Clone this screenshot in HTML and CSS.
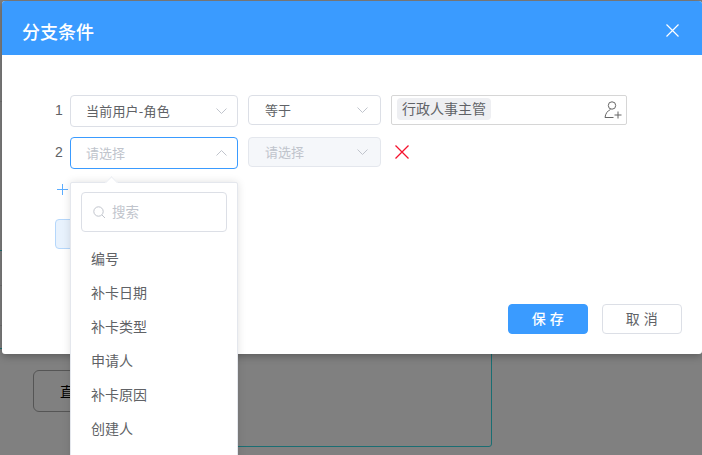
FILE: index.html
```html
<!DOCTYPE html>
<html lang="zh">
<head>
<meta charset="utf-8">
<title>分支条件</title>
<link rel="stylesheet" href="styles.css">
</head>
<body>
<div class="backdrop">
  <div class="bg-node">直</div>
  <div class="bg-frame"></div>
  <i class="tick tick-a"></i>
  <i class="tick tick-b"></i>
  <i class="tick tick-c"></i>
  <i class="tick tick-d"></i>
  <i class="tick tick-e"></i>
</div>
<section class="dialog">
  <header class="head">
    <h1 class="title">分支条件</h1>
    <svg class="close" viewBox="0 0 13 13"><path d="M.5.5l12 12M12.500.5l-12 12"/></svg>
  </header>
  <div class="body">
    <div class="row row-first">
      <span class="num">1</span>
      <div class="sel sel-field"><span class="val">当前用户-角色</span><svg class="chev" viewBox="0 0 11 6"><path d="M.5.500l5 5 5-5"/></svg></div>
      <div class="sel sel-op"><span class="txt">等于</span><svg class="chev" viewBox="0 0 11 6"><path d="M.5.500l5 5 5-5"/></svg></div>
      <div class="people">
        <span class="tag">行政人事主管</span>
        <svg class="user" viewBox="0 0 18 18"><circle cx="8" cy="4.500" r="3.700"/><path d="M6.500 8.500C3.500 9.800 1.500 12.500 1 16.500H9.500M10.500 14h7M14 10.500v7"/></svg>
      </div>
    </div>
    <div class="row row-second">
      <span class="num">2</span>
      <div class="sel sel-field focus"><span class="ph">请选择</span><svg class="chev" viewBox="0 0 11 6"><path d="M.5 5.500l5-5 5 5"/></svg></div>
      <div class="sel sel-op off"><span class="ph">请选择</span><svg class="chev" viewBox="0 0 11 6"><path d="M.5.500l5 5 5-5"/></svg></div>
      <svg class="del" viewBox="0 0 14 14"><path d="M.5.500l13 13M13.500.5l-13 13"/></svg>
    </div>
    <svg class="plus" viewBox="0 0 11 11"><path d="M5.500 0v11M0 5.500h11"/></svg>
    <div class="ghost"></div>
    <div class="foot">
      <button class="btn primary">保 存</button>
      <button class="btn">取 消</button>
    </div>
  </div>
</section>
<div class="drop">
  <div class="search">
    <svg class="mag" viewBox="0 0 13 13"><circle cx="5.500" cy="5.500" r="4.700"/><path d="M9 9l3 3"/></svg>
    <span class="search-text">搜索</span>
  </div>
  <ul class="opts">
    <li>编号</li>
    <li>补卡日期</li>
    <li>补卡类型</li>
    <li>申请人</li>
    <li>补卡原因</li>
    <li>创建人</li>
  </ul>
</div>
</body>
</html>
```
FILE: styles.css
```css
* { box-sizing: border-box; margin: 0; padding: 0; }
html, body { height: 100%; overflow: hidden; }
body {
  position: relative;
  background: #808080;
  font-family: "Noto Sans CJK SC", "Liberation Sans", sans-serif;
  color: #606266;
}
.backdrop { position: absolute; inset: 0; }
.bg-node {
  position: absolute; left: 33px; top: 370px; width: 100px; height: 42px;
  border: 1px solid #555; border-radius: 6px;
  color: #000; font-size: 14px; line-height: 40px; padding-left: 26px;
}
.bg-frame {
  position: absolute; left: 100px; top: 300px; width: 392px; height: 147px;
  border: 1px solid #1a6e73; border-radius: 3px;
}
.tick { position: absolute; left: 0; width: 2px; height: 1px; background: #737373; }
.tick-a { top: 101px; }
.tick-b { top: 250px; background: #1f7075; }
.tick-c { top: 285px; }
.tick-d { top: 325px; }
.tick-e { top: 348px; background: #1f7075; }
.dialog {
  position: absolute; left: 2px; top: 1px; width: 700px; height: 353px;
  background: #fff; border-radius: 3px; overflow: hidden;
  box-shadow: 0 2px 8px rgba(0,0,0,.3);
}
.head {
  height: 54px; background: #3a9bff; color: #fff;
  display: flex; align-items: center; justify-content: space-between;
  padding: 0 23px 0 20px;
}
.title { font-size: 18px; font-weight: 500; line-height: 24px; padding-top: 6px; }
.close { width: 13px; height: 13px; margin-top: 5px; fill: none; stroke: #fff; stroke-width: 1.200; }
.body { position: relative; height: 299px; padding: 40px 0 0 52px; }
.row { display: flex; align-items: flex-start; }
.row-second { margin-top: 10px; }
.num { width: 16px; padding-left: 1px; font-family: "Liberation Sans", sans-serif; font-size: 14px; line-height: 30px; }
.sel {
  display: flex; align-items: center; justify-content: space-between;
  background: #fff;
  border: 1px solid #dcdfe6; border-radius: 4px;
  font-size: 13px; padding: 0 10px 0 15px;
}
.val, .txt, .ph { padding-bottom: 2px; }
.val { letter-spacing: .2px; }
.sel-field { width: 168px; height: 32px; }
.sel-op { width: 133px; height: 30px; margin-left: 10px; padding: 0 12px 0 16px; }
.focus { border-color: #3a9bff; }
.off { background: #f5f7fa; border-color: #e4e7ed; }
.ph { color: #c0c4cc; }
.chev { width: 11px; height: 6px; fill: none; stroke: #c0c4cc; stroke-width: 1; }
.people {
  display: flex; align-items: center; justify-content: space-between;
  width: 236px; height: 30px; margin-left: 10px;
  border: 1px solid #d6d6d6; border-radius: 2px;
  padding: 0 4px 0 5px;
}
.tag {
  background: #eeeff2; border-radius: 4px; height: 22px; line-height: 20px;
  margin-bottom: 2px; padding: 0 5px; font-size: 14px; color: #606266;
}
.user { width: 18px; height: 18px; fill: none; stroke: #666; stroke-width: 1; }
.del { width: 14px; height: 14px; margin: 8px 0 0 14px; fill: none; stroke: #f5122d; stroke-width: 1.300; }
.plus { display: block; width: 11px; height: 11px; margin: 15px 0 0 3px; fill: none; stroke: #5cadff; stroke-width: 1; }
.ghost {
  width: 40px; height: 30px; margin: 24px 0 0 1px;
  background: #e8f2fd; border: 1px solid #b5d7fb; border-radius: 4px;
}
.foot {
  position: absolute; right: 20px; top: 249px;
  display: flex; gap: 14px;
}
.btn {
  width: 80px; height: 30px; background: #fff;
  border: 1px solid #dcdfe6; border-radius: 4px;
  font: inherit; font-size: 14px; color: #606266;
  letter-spacing: .5px; padding-bottom: 2px;
}
.primary { background: #3a9bff; border-color: #3a9bff; color: #fff; font-weight: 500; }
.drop {
  position: absolute; left: 70px; top: 182px; width: 168px; height: 290px;
  background: #fff; border: 1px solid #e4e7ed; border-radius: 2px;
  box-shadow: 0 0 8px rgba(0,0,0,.12);
  padding: 9px 10px 0;
}
.drop::before {
  content: ""; position: absolute; left: 36px; top: -5px;
  width: 8px; height: 8px; background: #fff; transform: rotate(45deg);
  border: 1px solid #eceef2; border-right: 0; border-bottom: 0;
}
.search {
  display: flex; align-items: center; gap: 6px;
  height: 40px; border: 1px solid #dcdfe6; border-radius: 4px;
  padding-left: 11px; font-size: 13.500px; color: #c0c4cc;
}
.search-text { padding-bottom: 2px; }
.mag { width: 13px; height: 13px; fill: none; stroke: #c0c4cc; stroke-width: 1; }
.opts { list-style: none; margin-top: 9px; }
.opts li { height: 34px; line-height: 34px; padding-left: 10px; font-size: 14px; color: #606266; }
```
